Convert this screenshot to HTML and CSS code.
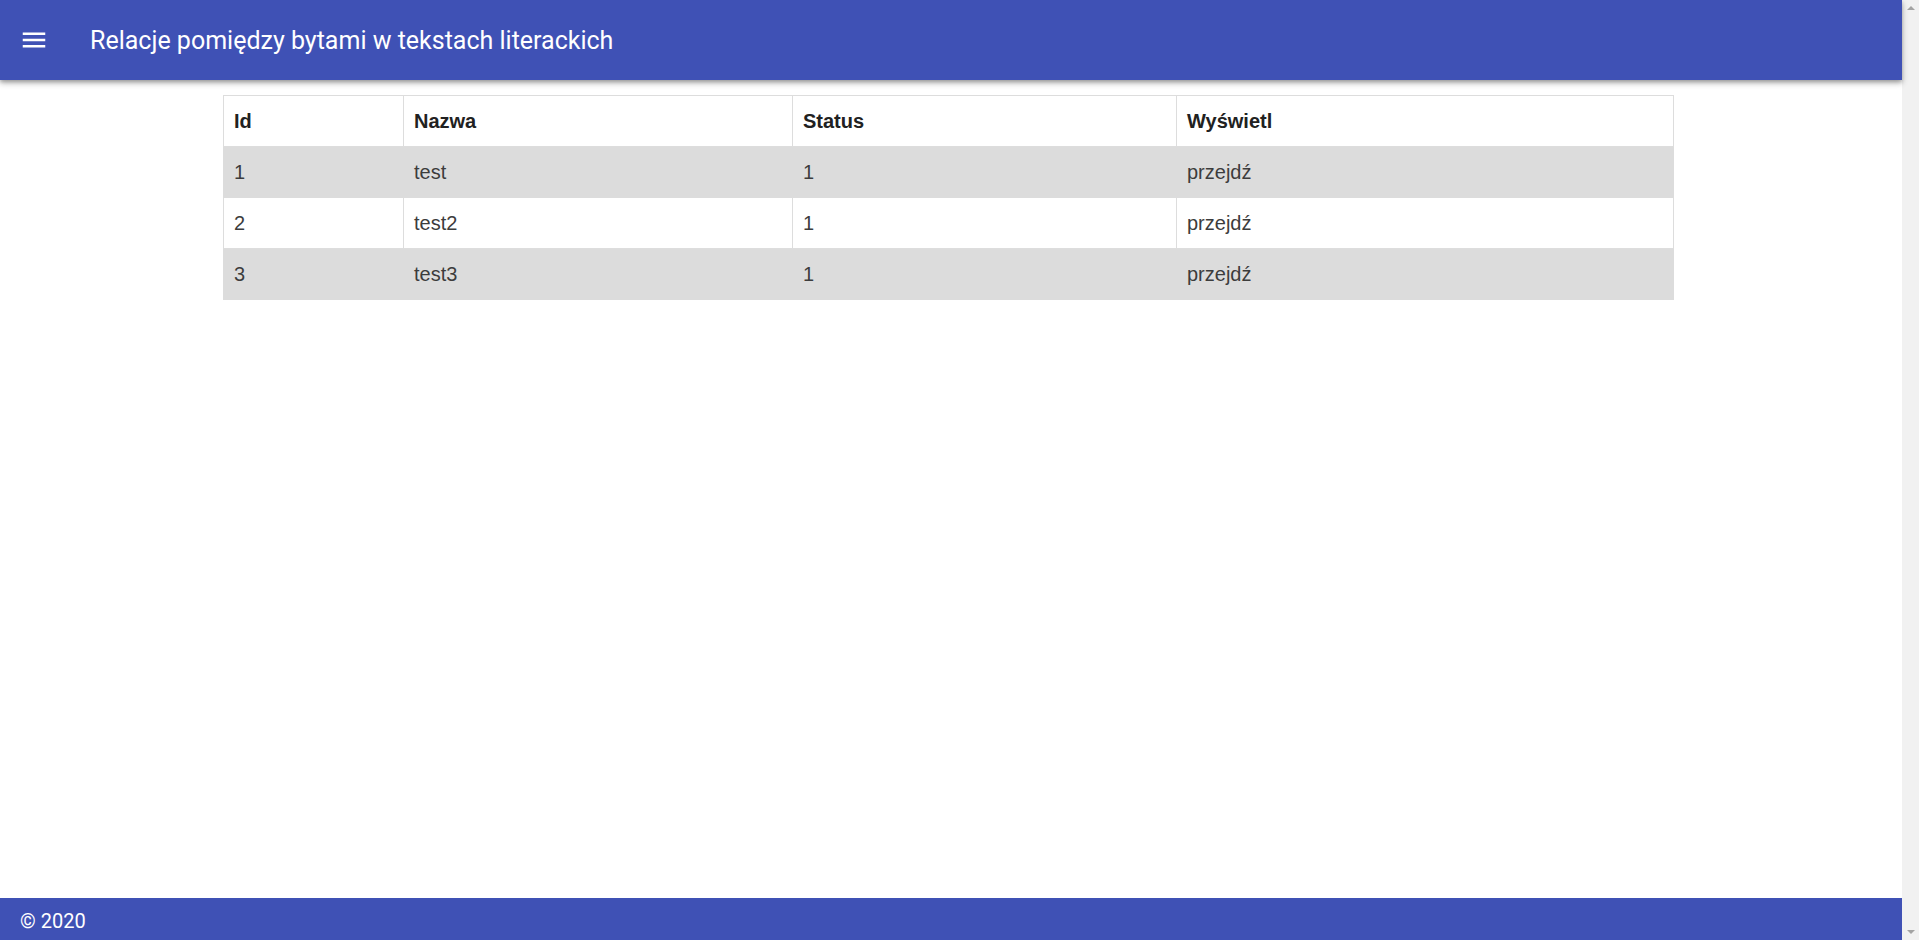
FILE: index.html
```html
<!DOCTYPE html>
<html lang="pl">
<head>
<meta charset="utf-8">
<title>Relacje pomiędzy bytami w tekstach literackich</title>
<link rel="stylesheet" href="styles.css">
</head>
<body>
<div class="window">
  <div class="app">
    <header class="toolbar">
      <button class="menu-btn" aria-label="menu">
        <svg width="30" height="30" viewBox="0 0 24 24"><path fill="#fff" d="M3 18h18v-2H3v2zm0-5h18v-2H3v2zm0-7v2h18V6H3z"/></svg>
      </button>
      <span class="title">Relacje pomiędzy bytami w tekstach literackich</span>
    </header>
    <main class="content">
      <table class="grid">
        <colgroup>
          <col class="c1"><col class="c2"><col class="c3"><col class="c4">
        </colgroup>
        <thead>
          <tr><th>Id</th><th>Nazwa</th><th>Status</th><th>Wyświetl</th></tr>
        </thead>
        <tbody>
          <tr class="odd"><td>1</td><td>test</td><td>1</td><td>przejdź</td></tr>
          <tr><td>2</td><td>test2</td><td>1</td><td>przejdź</td></tr>
          <tr class="odd"><td>3</td><td>test3</td><td>1</td><td>przejdź</td></tr>
        </tbody>
      </table>
    </main>
    <footer class="footer">© 2020</footer>
  </div>
  <div class="scrollbar">
    <span class="arrow up"></span>
    <span class="arrow down"></span>
  </div>
</div>
</body>
</html>
```
FILE: styles.css
```css
html, body {
  margin: 0;
  padding: 0;
  height: 100%;
  overflow: hidden;
}
body {
  font-family: "Liberation Sans", Arial, sans-serif;
  background: #fff;
}
.window {
  display: flex;
  height: 940px;
}
.app {
  flex: 1;
  display: flex;
  flex-direction: column;
  min-width: 0;
}
.toolbar {
  height: 80px;
  flex: none;
  background: #3f51b5;
  color: #fff;
  display: flex;
  align-items: center;
  padding: 0 0 0 19px;
  box-shadow: 0 3px 6px rgba(0,0,0,0.3), 0 2px 3px rgba(0,0,0,0.15);
  position: relative;
  z-index: 2;
}
.menu-btn {
  background: none;
  border: 0;
  padding: 0;
  margin: 0;
  width: 30px;
  height: 30px;
  display: flex;
  cursor: pointer;
}
.title {
  font-family: Roboto, "Noto Sans", sans-serif;
  font-weight: 400;
  font-size: 25px;
  margin-left: 41px;
  letter-spacing: 0;
}
.content {
  flex: 1;
  padding-top: 15px;
  padding-left: 223px;
}
.grid {
  border-collapse: collapse;
  table-layout: fixed;
  width: 1450px;
  font-size: 20px;
  color: #3c3c3c;
}
.c1 { width: 180px; }
.c2 { width: 389px; }
.c3 { width: 384px; }
.c4 { width: 497px; }
.grid th, .grid td {
  border: 1px solid #dddddd;
  padding: 12px 10px;
  line-height: 26px;
  text-align: left;
}
.grid th {
  font-weight: bold;
  color: #212121;
}
.grid tr.odd td {
  background: #dcdcdc;
  border-color: #dcdcdc;
}
.footer {
  height: 42px;
  flex: none;
  box-sizing: border-box;
  background: #3f51b5;
  color: #fff;
  font-family: Roboto, "Noto Sans", sans-serif;
  font-size: 20px;
  display: flex;
  align-items: center;
  padding: 3px 0 0 20px;
}
.scrollbar {
  width: 17px;
  flex: none;
  background: #f1f1f1;
  display: flex;
  flex-direction: column;
  justify-content: space-between;
  align-items: center;
  padding: 6px 0;
  box-sizing: border-box;
}
.arrow {
  width: 0;
  height: 0;
  border-left: 4px solid transparent;
  border-right: 4px solid transparent;
}
.arrow.up {
  border-bottom: 4px solid #a3a3a3;
}
.arrow.down {
  border-top: 4px solid #a3a3a3;
}
```
